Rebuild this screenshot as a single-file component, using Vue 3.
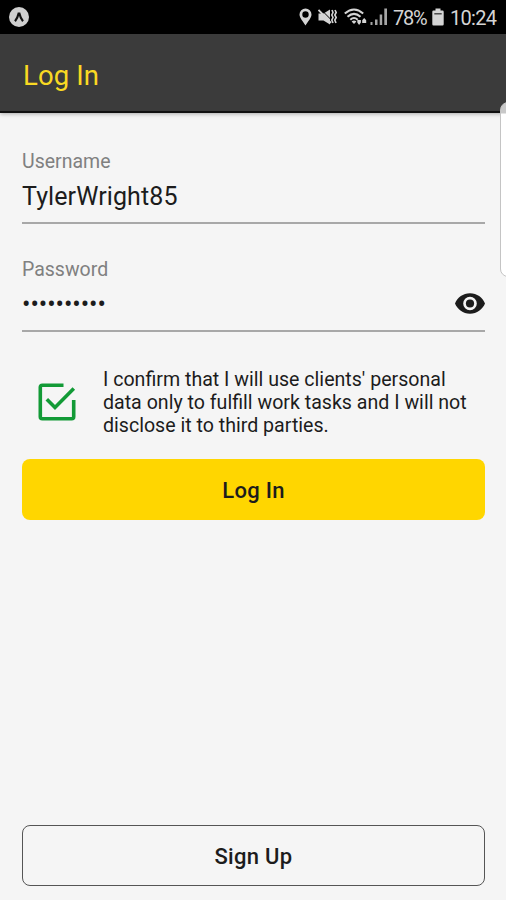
<template>
  <div class="screen">
    <div class="statusBar">
      <svg class="appIcon" viewBox="0 0 20 20">
        <circle cx="10" cy="10" r="10" fill="#cfcfcf" />
        <path d="M6 14.3 Q8.5 11.5 9.6 6.6 H10.4 Q11.5 11.5 14 14.3" fill="none" stroke="#111" stroke-width="2.2" />
      </svg>
      <div class="statusIcons">
        <svg class="pinIcon" viewBox="0 0 13 18">
          <path fill-rule="evenodd" d="M6.5 0.5 A6 6 0 0 0 0.5 6.5 C0.5 10 4 13 6.5 17.5 C9 13 12.5 10 12.5 6.5 A6 6 0 0 0 6.5 0.5 Z M6.5 3.3 A3.2 3.2 0 1 1 6.5 9.7 A3.2 3.2 0 1 1 6.5 3.3 Z" fill="#d4d4d4" />
        </svg>
        <svg class="muteIcon" viewBox="0 0 19 18">
          <path d="M0.5 5.5 H5.5 L12 1.5 V16.5 L5.5 12.5 H0.5 Z" fill="#d4d4d4" />
          <path d="M2.5 1 L13 11.6" stroke="#000" stroke-width="1" />
          <path d="M0.5 2 L13 14.8" stroke="#d4d4d4" stroke-width="1.8" />
          <path d="M14 2 L15 4.5 L13.8 7 L15 9.5 L13.8 12 L15 15 M17 2 L18.2 4.5 L16.8 7 L18.2 9.5 L16.8 12 L18 15" fill="none" stroke="#d4d4d4" stroke-width="1.6" />
        </svg>
        <svg class="wifiIcon" viewBox="0 0 23 18">
          <g fill="none" stroke="#d4d4d4" stroke-width="2">
            <path d="M0.8 5.5 Q10 -2.5 19.2 5.5" />
            <path d="M3.5 8.8 Q10 3 16.5 8.8" />
            <path d="M6.3 11.8 Q10 8.3 13.7 11.8" />
          </g>
          <path d="M7.6 13.4 Q10 11.5 12.4 13.4 L10 16 Z" fill="#d4d4d4" />
          <path d="M13.3 12 H16.9 V14.5 L15.1 17 L13.3 14.5 Z M18.2 15 V12.3 L20.2 10 L22.2 12.3 V15 Z" fill="#d4d4d4" />
        </svg>
        <svg class="signalIcon" viewBox="0 0 18 18">
          <path d="M0.5 14 H2.5 V17 H0.5 Z M5 11.5 H7.5 V17 H5 Z M9.7 6.5 H12.2 V17 H9.7 Z M14.3 0.5 H17 V17 H14.3 Z" fill="#a5a5a5" />
        </svg>
        <span class="percent">78%</span>
        <svg class="batteryIcon" viewBox="0 0 12 18">
          <path d="M3.5 0.5 H8.5 V2.5 H10.5 Q11.7 2.5 11.7 3.7 V16.3 Q11.7 17.5 10.5 17.5 H1.5 Q0.3 17.5 0.3 16.3 V3.7 Q0.3 2.5 1.5 2.5 H3.5 Z" fill="#d4d4d4" />
          <path d="M2.3 5.8 H9.7" stroke="#333" stroke-width="1.3" />
        </svg>
        <span class="time">10:24</span>
      </div>
    </div>

    <header class="header">
      <h1 class="title">Log In</h1>
    </header>

    <form class="content" @submit.prevent="logIn">
      <div class="field">
        <label for="username">Username</label>
        <input id="username" v-model="username" type="text" />
      </div>
      <div class="field">
        <label for="password">Password</label>
        <input id="password" v-model="password" :type="showPassword ? 'text' : 'password'" />
        <svg class="eyeIcon" viewBox="0 0 30 21" @click="showPassword = !showPassword">
          <path fill-rule="evenodd" d="M15 0.3 C8 0.3 2.5 4.5 0 10.5 C2.5 16.5 8 20.7 15 20.7 C22 20.7 27.5 16.5 30 10.5 C27.5 4.5 22 0.3 15 0.3 Z M15 3.7 A6.8 6.8 0 1 1 15 17.3 A6.8 6.8 0 1 1 15 3.7 Z" fill="#1c1c1c" />
          <circle cx="15" cy="10.5" r="4.1" fill="#1c1c1c" />
        </svg>
      </div>
      <div class="confirm" @click="confirmed = !confirmed">
        <svg class="checkIcon" viewBox="0 0 38 38">
          <g fill="none" stroke="#129a36" stroke-width="3.6">
            <path d="M25.5 2.3 H4.3 Q2.3 2.3 2.3 4.3 V33.7 Q2.3 35.7 4.3 35.7 H33.7 Q35.7 35.7 35.7 33.7 V17" />
            <path v-if="confirmed" d="M8.8 16.2 L17 24.4 L35.8 5.6" />
          </g>
        </svg>
        <p class="confirm-text">
          I confirm that I will use clients' personal<br />
          data only to fulfill work tasks and I will not<br />
          disclose it to third parties.
        </p>
      </div>
      <button class="loginButton" type="submit">Log In</button>
      <button class="signupButton" type="button">Sign Up</button>
    </form>

    <div class="edgeHandle"></div>
  </div>
</template>

<script setup>
import { ref } from 'vue'

const username = ref('TylerWright85')
const password = ref('wright1985')
const showPassword = ref(false)
const confirmed = ref(true)

function logIn() {
  if (!confirmed.value) {
    return
  }
  showPassword.value = false
}
</script>

<style>
html, body {
  margin: 0;
  padding: 0;
  background-color: #f5f5f5;
}
</style>

<style scoped>
.screen {
  position: relative;
  display: flex;
  flex-direction: column;
  height: 900px;
  overflow: hidden;
  background-color: #f5f5f5;
  color: #1c1c1c;
  font-family: Roboto, "Liberation Sans", sans-serif;
}

.statusBar {
  display: flex;
  align-items: center;
  justify-content: space-between;
  box-sizing: border-box;
  height: 34px;
  padding: 0 10px 0 9px;
  background-color: #000;
  color: #d4d4d4;
  font-size: 20px;
}

.appIcon {
  width: 20px;
  height: 20px;
}

.statusIcons {
  display: flex;
  align-items: center;
}

.pinIcon {
  width: 13px;
  height: 18px;
  margin-right: 6px;
}

.muteIcon {
  width: 19px;
  height: 18px;
  margin-right: 7px;
}

.wifiIcon {
  width: 23px;
  height: 18px;
  margin-right: 3px;
}

.signalIcon {
  width: 18px;
  height: 18px;
  margin-right: 5px;
}

.percent {
  width: 34px;
  padding-top: 2px;
  margin-right: 5px;
  letter-spacing: -1.3px;
}

.batteryIcon {
  width: 12px;
  height: 18px;
  margin-right: 6px;
}

.time {
  width: 46px;
  padding-top: 2px;
  letter-spacing: -0.7px;
}

.header {
  display: flex;
  align-items: center;
  box-sizing: border-box;
  height: 79px;
  padding: 6px 23px 0 23px;
  background-color: #3b3b3b;
  border-bottom: 2px solid #111;
  box-shadow: 0 1px 4px rgba(0, 0, 0, 0.3);
}

.title {
  margin: 0;
  color: #f9d923;
  font-size: 27.5px;
  font-weight: 400;
  letter-spacing: 0.1px;
}

.content {
  display: flex;
  flex: 1;
  flex-direction: column;
  padding: 36px 21px 14px 22px;
}

.field {
  position: relative;
  display: flex;
  flex-direction: column;
  box-sizing: border-box;
  height: 75px;
  margin-bottom: 33px;
  border-bottom: 2px solid #a8a8a8;
}

label {
  height: 24px;
  color: #808080;
  font-size: 19.5px;
  line-height: 26px;
}

input {
  height: 46px;
  padding: 0;
  border: none;
  outline: none;
  background: none;
  color: #1c1c1c;
  font-family: inherit;
  font-size: 25px;
  letter-spacing: 0.1px;
}

input[type='password'] {
  letter-spacing: -0.05px;
}

.eyeIcon {
  position: absolute;
  right: 0;
  bottom: 16px;
  width: 30px;
  height: 21px;
  cursor: pointer;
}

.confirm {
  display: flex;
  align-items: center;
  gap: 27px;
  height: 69px;
  margin: 2px 0 23px;
  padding-left: 16px;
}

.checkIcon {
  flex-shrink: 0;
  width: 38px;
  height: 38px;
}

.confirm-text {
  margin: 0;
  padding-top: 2px;
  font-size: 19.6px;
  line-height: 23px;
  white-space: nowrap;
}

button {
  flex-shrink: 0;
  height: 61px;
  padding: 2px 0 0;
  border: none;
  border-radius: 8px;
  color: #1c1c1c;
  font-family: inherit;
  font-size: 22px;
  font-weight: 500;
  letter-spacing: 0.3px;
  cursor: pointer;
}

.loginButton {
  background-color: #ffd600;
}

.signupButton {
  margin-top: auto;
  background: none;
  border: 1px solid #555;
}

.edgeHandle {
  position: absolute;
  top: 102px;
  right: -10px;
  box-sizing: border-box;
  width: 16px;
  height: 175px;
  border: 1px solid #c4c4c4;
  border-radius: 8px;
  background: linear-gradient(#c8c8c8 10px, #fff 11px);
}
</style>
